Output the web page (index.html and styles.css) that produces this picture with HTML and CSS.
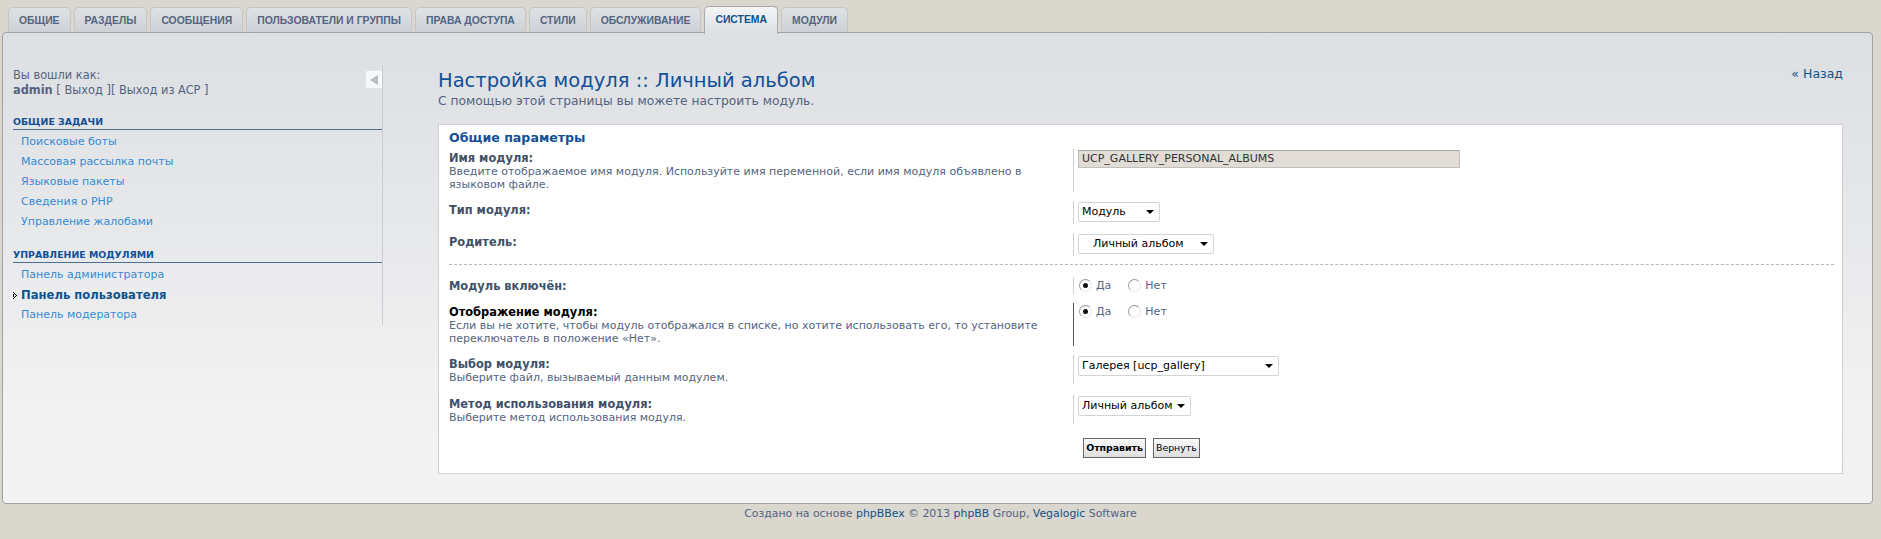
FILE: index.html
```html
<!DOCTYPE html>
<html lang="ru">
<head>
<meta charset="utf-8">
<title>Настройка модуля</title>
<link rel="stylesheet" href="styles.css">
</head>
<body>
<nav class="tabs">
  <a class="tab">ОБЩИЕ</a>
  <a class="tab">РАЗДЕЛЫ</a>
  <a class="tab">СООБЩЕНИЯ</a>
  <a class="tab">ПОЛЬЗОВАТЕЛИ И ГРУППЫ</a>
  <a class="tab">ПРАВА ДОСТУПА</a>
  <a class="tab">СТИЛИ</a>
  <a class="tab">ОБСЛУЖИВАНИЕ</a>
  <a class="tab active">СИСТЕМА</a>
  <a class="tab">МОДУЛИ</a>
</nav>
<div class="panel">
  <aside class="menu">
    <div class="login-row">
      <div class="login">Вы вошли как:<br><b>admin</b> [&nbsp;<a>Выход</a>&nbsp;][&nbsp;<a>Выход из ACP</a>&nbsp;]</div>
      <span class="collapse"><svg width="10" height="10" viewBox="0 0 10 10"><path d="M9 0 L9 10 L1 5 Z" fill="#b9bcc2"/></svg></span>
    </div>
    <div class="menu-block">
      <h3>ОБЩИЕ ЗАДАЧИ</h3>
      <ul>
        <li><a>Поисковые боты</a></li>
        <li><a>Массовая рассылка почты</a></li>
        <li><a>Языковые пакеты</a></li>
        <li><a>Сведения о PHP</a></li>
        <li><a>Управление жалобами</a></li>
      </ul>
    </div>
    <div class="menu-block">
      <h3>УПРАВЛЕНИЕ МОДУЛЯМИ</h3>
      <ul>
        <li><a>Панель администратора</a></li>
        <li class="current"><svg class="bullet" width="4" height="7" viewBox="0 0 4 7"><rect x="0" y="0" width="1" height="1" fill="#000"/><rect x="1" y="1" width="1" height="1" fill="#000"/><rect x="2" y="2" width="1" height="1" fill="#000"/><rect x="3" y="3" width="1" height="1" fill="#000"/><rect x="2" y="4" width="1" height="1" fill="#000"/><rect x="1" y="5" width="1" height="1" fill="#000"/><rect x="0" y="6" width="1" height="1" fill="#000"/><rect x="0" y="2" width="1" height="3" fill="#000"/></svg><a>Панель пользователя</a></li>
        <li><a>Панель модератора</a></li>
      </ul>
    </div>
  </aside>
  <main class="content">
    <div class="head">
      <div class="titles">
        <h1>Настройка модуля :: Личный альбом</h1>
        <p class="lead">С помощью этой страницы вы можете настроить модуль.</p>
      </div>
      <a class="back">« Назад</a>
    </div>
    <section class="box">
      <div class="legend">Общие параметры</div>
      <div class="row">
        <div class="dt"><div class="label">Имя модуля:</div><div class="desc">Введите отображаемое имя модуля. Используйте имя переменной, если имя модуля объявлено в языковом файле.</div></div>
        <div class="dd"><div class="textbox">UCP_GALLERY_PERSONAL_ALBUMS</div></div>
      </div>
      <div class="row">
        <div class="dt"><div class="label">Тип модуля:</div></div>
        <div class="dd"><div class="select w-type">Модуль<span class="arrow"></span></div></div>
      </div>
      <div class="row">
        <div class="dt"><div class="label">Родитель:</div></div>
        <div class="dd"><div class="select w-parent indent">Личный альбом<span class="arrow"></span></div></div>
      </div>
      <hr class="dash">
      <div class="row">
        <div class="dt"><div class="label">Модуль включён:</div></div>
        <div class="dd"><div class="radios"><span class="radio on"></span><span class="rlabel">Да</span><span class="radio"></span><span class="rlabel">Нет</span></div></div>
      </div>
      <div class="row hover">
        <div class="dt"><div class="label">Отображение модуля:</div><div class="desc">Если вы не хотите, чтобы модуль отображался в списке, но хотите использовать его, то установите переключатель в положение «Нет».</div></div>
        <div class="dd"><div class="radios"><span class="radio on"></span><span class="rlabel">Да</span><span class="radio"></span><span class="rlabel">Нет</span></div></div>
      </div>
      <div class="row">
        <div class="dt"><div class="label">Выбор модуля:</div><div class="desc">Выберите файл, вызываемый данным модулем.</div></div>
        <div class="dd"><div class="select w-file">Галерея [ucp_gallery]<span class="arrow"></span></div></div>
      </div>
      <div class="row spaced">
        <div class="dt"><div class="label">Метод использования модуля:</div><div class="desc">Выберите метод использования модуля.</div></div>
        <div class="dd"><div class="select w-mode">Личный альбом<span class="arrow"></span></div></div>
      </div>
      <div class="buttons">
        <span class="btn bold">Отправить</span>
        <span class="btn">Вернуть</span>
      </div>
    </section>
  </main>
</div>
<footer class="footer">Создано на основе <a>phpBBex</a> © 2013 <a>phpBB</a> Group, <a>Vegalogic</a> Software</footer>
</body>
</html>
```

FILE: styles.css
```css
html, body {
  margin: 0;
  padding: 0;
}
body {
  background: #dad7cf;
  font-family: "DejaVu Sans", Verdana, sans-serif;
  font-size: 11px;
  color: #536482;
}
a {
  color: #368ad2;
  text-decoration: none;
}

/* tabs */
.tabs {
  display: flex;
  gap: 3px;
  padding: 7px 0 0 8px;
  height: 25px;
  position: relative;
  z-index: 2;
}
.tab {
  display: block;
  height: 24px;
  line-height: 25px;
  padding: 0 10px;
  border: 1px solid #c5c6c8;
  border-bottom: none;
  border-radius: 5px 5px 0 0;
  background: linear-gradient(#dfe2e5, #cdd1d6);
  font-family: "Liberation Sans", Arial, sans-serif;
  font-weight: bold;
  font-size: 10.4px;
  color: #536482;
}
.tab.active {
  height: 27px;
  margin-top: -1px;
  border-color: #a8a9ab;
  background: linear-gradient(#f4f5f6, #dcdfe3);
  color: #105289;
}

/* main panel */
.panel {
  margin: 0 8px 0 2px;
  border: 1px solid #a2a2a2;
  border-radius: 4px;
  background: linear-gradient(#dcdfe3, #e8e9eb 45%, #f2f2f2 80%, #f3f3f3);
  display: flex;
  padding: 32px 29px 29px 10px;
  gap: 55px;
}

/* sidebar */
.menu {
  width: 369px;
  flex: none;
  align-self: flex-start;
  border-right: 1px solid #c9cbcf;
  padding-top: 2px;
  height: 258px;
}
.login-row {
  display: flex;
  justify-content: space-between;
  align-items: flex-start;
}
.login {
  line-height: 15px;
  padding-top: 1px;
  font-size: 11.4px;
}
.login b {
  color: #536482;
}
.login a {
  color: #536482;
}
.collapse {
  display: flex;
  align-items: center;
  justify-content: center;
  width: 16px;
  height: 17px;
  margin-top: 3px;
  background: #f7f8f9;
  border: 1px solid #e3e5e8;
  border-right: none;
  border-radius: 3px 0 0 3px;
}
.menu-block {
  margin-top: 17px;
}
.menu-block + .menu-block {
  margin-top: 16px;
}
.menu-block h3 {
  margin: 0;
  font-size: 9.4px;
  font-weight: bold;
  color: #115098;
  line-height: 13px;
  padding-bottom: 1px;
  border-bottom: 1px solid #4d6e90;
}
.menu-block ul {
  list-style: none;
  margin: 2px 0 0;
  padding: 0;
}
.menu-block li {
  height: 20px;
  line-height: 20px;
  padding-left: 8px;
  position: relative;
}
.menu-block li.current a {
  font-weight: bold;
  font-size: 11.6px;
  color: #105289;
}
.bullet {
  position: absolute;
  left: 0;
  top: 7px;
}

/* content */
.content {
  flex: 1;
  min-width: 0;
}
.head {
  display: flex;
  justify-content: space-between;
  align-items: flex-start;
}
h1 {
  margin: 3px 0 0;
  font-family: "DejaVu Sans", Verdana, sans-serif;
  font-weight: normal;
  font-size: 19.5px;
  line-height: 26px;
  color: #115098;
}
.lead {
  margin: 0;
  line-height: 15px;
  font-size: 12.3px;
  color: #536482;
}
.back {
  color: #105289;
  font-size: 12.5px;
  line-height: 15px;
  margin-top: 1px;
}

.box {
  margin-top: 15px;
  background: #fff;
  border: 1px solid #d0d0d0;
  padding: 5px 8px 15px 10px;
}
.legend {
  font-weight: bold;
  font-size: 12.6px;
  color: #115098;
  line-height: 15px;
  height: 14px;
}
.row {
  display: flex;
  padding: 4.5px 0;
}
.row.spaced {
  padding-top: 6px;
}
.dt {
  width: 624px;
  flex: none;
  padding-top: 3px;
}
.label {
  font-weight: bold;
  font-size: 11.4px;
  color: #425067;
  line-height: 13px;
}
.row.hover .label {
  color: #000;
}
.desc {
  line-height: 13.5px;
  color: #536482;
  padding-right: 10px;
}
.dd {
  border-left: 1px solid #cfd0d2;
  padding: 1px 0 2px 4px;
  flex: 1;
}
.row.hover .dd {
  border-left-color: #555;
}

.textbox {
  width: 377px;
  height: 16px;
  line-height: 16px;
  padding-left: 3px;
  background: #e1ddd6;
  border: 1px solid #c1bfba;
  border-top-color: #a9a6a1;
  color: #333;
  font-size: 11px;
}
.select {
  position: relative;
  height: 18px;
  line-height: 18px;
  padding-left: 3px;
  background: #fff;
  border: 1px solid #d3d4d6;
  border-radius: 2px;
  color: #000;
  font-size: 11px;
}
.select.indent {
  padding-left: 14px;
}
.arrow {
  position: absolute;
  right: 5px;
  top: 7px;
  width: 0;
  height: 0;
  border-left: 4px solid transparent;
  border-right: 4px solid transparent;
  border-top: 4px solid #000;
}
.w-type { width: 77px; }
.w-parent { width: 120px; }
.w-file { width: 196px; }
.w-mode { width: 108px; }

.dash {
  border: none;
  border-top: 1px dashed #b8b8b8;
  margin: 4px 0 7px;
  height: 0;
}

.radios {
  display: flex;
  align-items: center;
  height: 13px;
  padding-top: 1px;
}
.radio {
  width: 11px;
  height: 11px;
  border-radius: 50%;
  border: 1px solid #9a9a9a;
  border-right-color: #e6e6e6;
  border-bottom-color: #e6e6e6;
  background: #fff;
  position: relative;
  margin-left: 1px;
}
.radio.on::after {
  content: "";
  position: absolute;
  left: 3px;
  top: 3px;
  width: 5px;
  height: 5px;
  border-radius: 50%;
  background: #111;
}
.rlabel {
  margin-left: 4px;
  margin-right: 16px;
  color: #536482;
  line-height: 13px;
}

.buttons {
  display: flex;
  justify-content: center;
  gap: 7px;
  margin-top: 9px;
}
.btn {
  display: block;
  height: 18px;
  line-height: 18px;
  padding: 0 2px;
  border: 1px solid #666;
  background: linear-gradient(#fafafa, #dedede);
  color: #000;
  font-size: 9.4px;
}
.btn.bold {
  font-weight: bold;
}

.footer {
  text-align: center;
  padding-top: 3px;
  line-height: 14px;
  font-size: 10.9px;
  color: #536482;
}
.footer a {
  color: #105289;
}
```
